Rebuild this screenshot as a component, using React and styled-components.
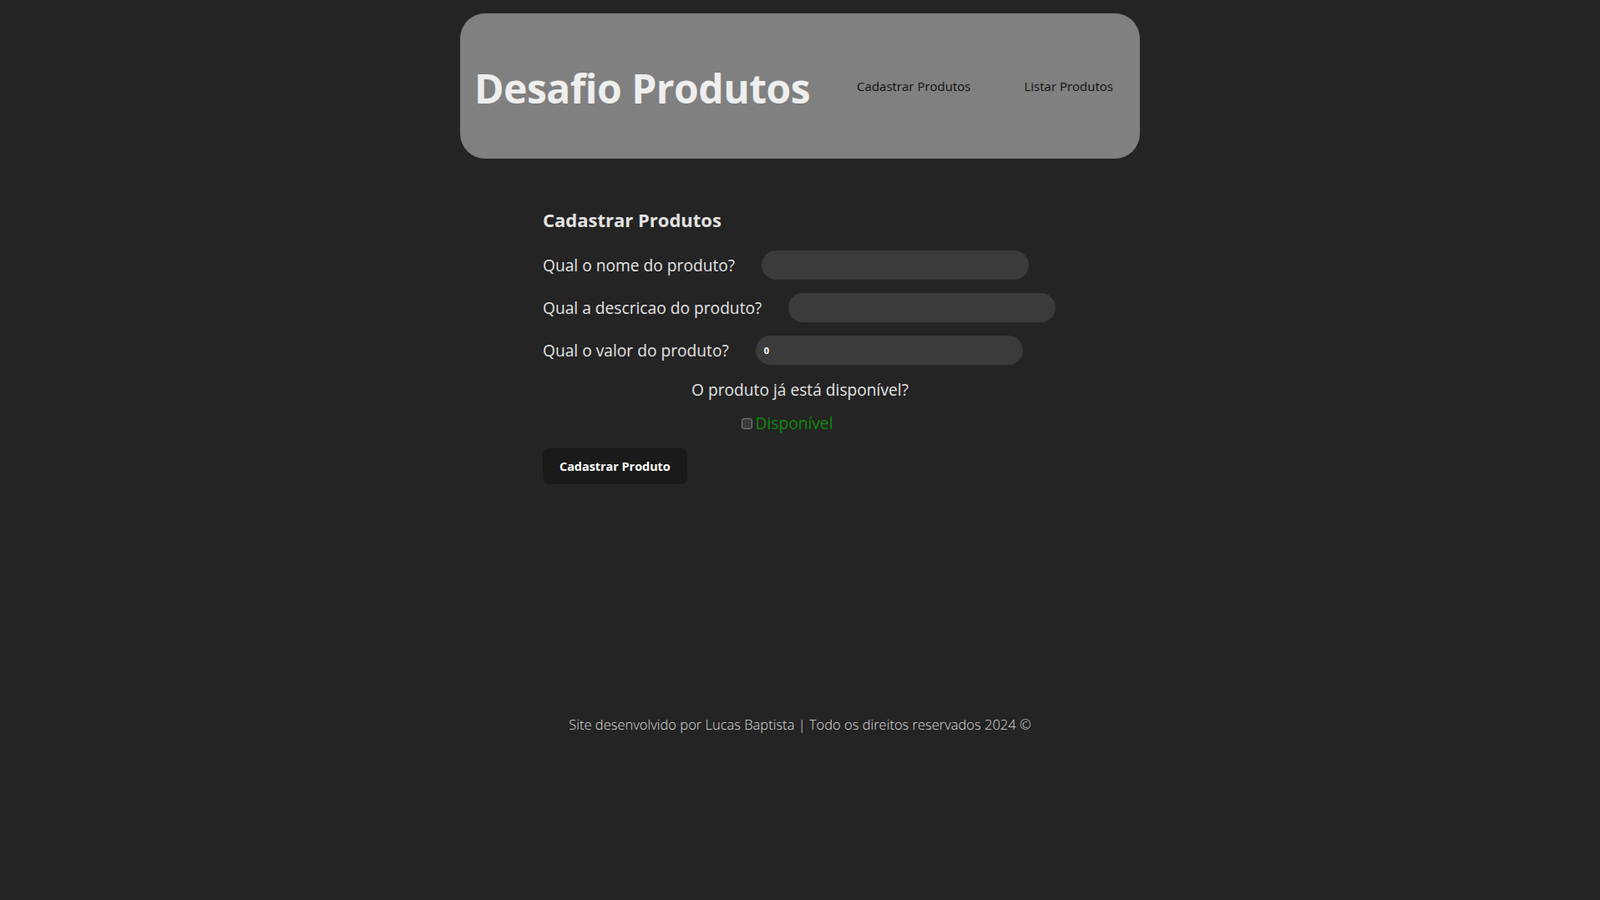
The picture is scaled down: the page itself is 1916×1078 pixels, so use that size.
import React from 'react'
import styled, { createGlobalStyle } from 'styled-components'

const GlobalStyle = createGlobalStyle`
  body {
    margin: 0;
    background-color: #242424;
    color: rgba(255, 255, 255, 0.87);
    font-family: 'Open Sans', 'Noto Sans', sans-serif;
  }
`

const Page = styled.div`
  min-height: 100vh;
  padding-top: 16px;
  box-sizing: border-box;
`

const Header = styled.header`
  width: 814px;
  height: 174px;
  margin: 0 auto;
  box-sizing: border-box;
  padding: 0 32px 0 17px;
  display: flex;
  align-items: center;
  justify-content: space-between;
  background-color: #808080;
  border-radius: 30px;
`

const Title = styled.h1`
  margin: 4px 0 0;
  font-size: 48px;
  font-weight: 700;
  letter-spacing: -0.5px;
  color: #eeeeee;
`

const Nav = styled.nav`
  display: flex;
  gap: 64px;
`

const NavLink = styled.a`
  font-size: 15px;
  color: #111;
  text-decoration: none;
  cursor: pointer;
`

const Main = styled.main`
  width: 616px;
  margin: 0 auto;
  padding-top: 58px;
`

const Heading = styled.h2`
  margin: 0 0 22px;
  font-size: 22px;
  font-weight: 700;
  color: #e3e3e3;
`

const Field = styled.div`
  display: flex;
  align-items: center;
  gap: 32px;
  margin-bottom: 16px;
`

const Label = styled.label`
  font-size: 19.2px;
  color: #e3e3e3;
`

const Input = styled.input`
  width: 320px;
  height: 35px;
  box-sizing: border-box;
  border: none;
  border-radius: 18px;
  padding: 0 10px;
  background-color: #3b3b3b;
  color: #fff;
  font-family: 'Open Sans', sans-serif;
  font-size: 11px;
  font-weight: 700;
  outline: none;
`

const Question = styled.p`
  margin: 10px 0 0;
  text-align: center;
  font-size: 19.2px;
  color: #e3e3e3;
`

const CheckRow = styled.div`
  display: flex;
  justify-content: center;
  align-items: center;
  padding-right: 30px;
  margin-top: 13px;
`

const Checkbox = styled.input`
  appearance: none;
  width: 13px;
  height: 13px;
  margin: 1px 3px 0 0;
  box-sizing: border-box;
  border: 1px solid #808080;
  border-radius: 3px;
  background-color: #3b3b3b;
  cursor: pointer;

  &:checked {
    background-color: #0f8a0f;
  }
`

const CheckLabel = styled.label`
  font-size: 19.2px;
  color: #0f8a0f;
`

const Button = styled.button`
  margin-top: 17px;
  height: 43px;
  padding: 0 19px;
  border: 1px solid transparent;
  border-radius: 8px;
  background-color: #1a1a1a;
  color: #fff;
  font-family: 'Open Sans', sans-serif;
  font-size: 14.4px;
  font-weight: 700;
  cursor: pointer;
`

const Footer = styled.footer`
  margin-top: 276px;
  text-align: center;
  font-size: 16.5px;
  font-weight: 300;
  color: #dcdcdc;
`

export default function App() {
  return (
    <>
      <GlobalStyle />
      <Page>
        <Header>
          <Title>Desafio Produtos</Title>
          <Nav>
            <NavLink>Cadastrar Produtos</NavLink>
            <NavLink>Listar Produtos</NavLink>
          </Nav>
        </Header>
        <Main>
          <Heading>Cadastrar Produtos</Heading>
          <Field>
            <Label>Qual o nome do produto?</Label>
            <Input type="text" />
          </Field>
          <Field>
            <Label>Qual a descricao do produto?</Label>
            <Input type="text" />
          </Field>
          <Field>
            <Label>Qual o valor do produto?</Label>
            <Input type="number" defaultValue={0} />
          </Field>
          <Question>O produto já está disponível?</Question>
          <CheckRow>
            <Checkbox type="checkbox" id="disponivel" />
            <CheckLabel htmlFor="disponivel">Disponível</CheckLabel>
          </CheckRow>
          <Button>Cadastrar Produto</Button>
        </Main>
        <Footer>
          Site desenvolvido por Lucas Baptista | Todo os direitos reservados 2024 ©
        </Footer>
      </Page>
    </>
  )
}
